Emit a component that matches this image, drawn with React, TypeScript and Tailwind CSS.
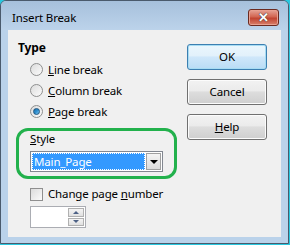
import React from 'react'

function Radio({ checked }: { checked?: boolean }) {
  return (
    <span className="w-[13px] h-[13px] rounded-full border border-[#8e8f8f] bg-gradient-to-br from-[#dcdcdc] to-[#fbfbfb] flex items-center justify-center flex-none">
      {checked && (
        <span className="w-[7px] h-[7px] rounded-full bg-gradient-to-br from-[#1a6ca8] via-[#2f8fcf] to-[#7cc7f0] border border-[#1d5580]" />
      )}
    </span>
  )
}

function Btn({ children, def }: { children: React.ReactNode; def?: boolean }) {
  return (
    <div
      className={
        def
          ? 'w-[80px] h-[26px] rounded-[3px] border border-[#3c7fb1] shadow-[inset_0_0_0_1px_#a7dcf3] bg-[linear-gradient(#eaf6fd_0%,#e2f1fb_45%,#cfe7fa_50%,#b9dcf5_100%)] flex items-center justify-center'
          : 'w-[80px] h-[26px] rounded-[3px] border border-[#707070] shadow-[inset_0_0_0_1px_#fcfcfc] bg-[linear-gradient(#f2f2f2_0%,#ebebeb_45%,#dddddd_50%,#cfcfcf_100%)] flex items-center justify-center'
      }
    >
      <span className="leading-none text-black">{children}</span>
    </div>
  )
}

export default function App() {
  return (
    <div className="w-[290px] h-[245px] bg-[#28c8e0] pr-px pb-px font-['Noto_Sans',sans-serif] text-[11.5px] tracking-[-0.15px] text-black">
      <div className="w-full h-full rounded-t-[6px] border border-[#4a5a6c] bg-[#bad2ea] flex flex-col px-[7px] pb-[6px]">
        <div className="h-[29px] -mx-[7px] px-[11px] rounded-t-[5px] bg-[linear-gradient(#a6c0dc,#bcd3ea)] flex items-start justify-between">
          <span className="mt-[9px] leading-[16px] text-black">Insert Break</span>
          <div className="w-[31px] h-[17px] mt-[8px] mr-[-2px] rounded-[3px] border border-[#6b2a20] shadow-[inset_0_0_0_1px_#e8a090] bg-[linear-gradient(#e6a396,#d26652_45%,#c14431_55%,#d8806b)] flex items-center justify-center">
            <span className="text-white font-bold text-[13px] leading-none [text-shadow:0_0_1px_#333,0_0_1px_#333]">✕</span>
          </div>
        </div>
        <div className="flex-1 bg-[#f0f0f0] flex">
          <div className="w-[177px] flex flex-col pl-[8px]">
            <div className="h-[20px] mt-[8px] flex items-center pl-[2px] font-bold text-[12px]">Type</div>
            <div className="flex flex-col pl-[14px] mt-px">
              <div className="h-[21px] flex items-center gap-[5px]">
                <Radio />
                <span><span className="underline">L</span>ine break</span>
              </div>
              <div className="h-[21px] flex items-center gap-[5px]">
                <Radio />
                <span><span className="underline">C</span>olumn break</span>
              </div>
              <div className="h-[21px] flex items-center gap-[5px]">
                <Radio checked />
                <span><span className="underline">P</span>age break</span>
              </div>
            </div>
            <div className="mt-[6px] w-[161px] h-[51px] border-[3px] border-[#22b14c] rounded-[12px] flex flex-col pl-[11px]">
              <div className="h-[16px] flex items-center"><span><span className="underline">S</span>tyle</span></div>
              <div className="mt-[4px] w-[133px] h-[21px] border border-[#828790] bg-white flex p-[1px]">
                <div className="flex-1 bg-[#3399ff] outline-1 outline-dotted outline-[#ffffff] -outline-offset-1 flex items-center pl-[2px]">
                  <span className="text-white">Main_Page</span>
                </div>
                <div className="w-[15px] border border-[#a0a0a0] bg-[linear-gradient(#f4f4f4,#dcdcdc)] flex items-center justify-center ml-px">
                  <span className="w-0 h-0 border-l-[4px] border-r-[4px] border-t-[4px] border-l-transparent border-r-transparent border-t-black" />
                </div>
              </div>
            </div>
            <div className="h-[16px] mt-[7px] flex items-center gap-[5px] pl-[14px]">
              <span className="w-[13px] h-[13px] border border-[#8f8f8f] bg-gradient-to-br from-[#dcdcdc] to-[#fbfbfb] flex-none" />
              <span>Change page <span className="underline">n</span>umber</span>
            </div>
            <div className="ml-[14px] mt-[4px] w-[56px] h-[22px] border border-[#abadb3] bg-white flex justify-end p-px">
              <div className="w-[16px] flex flex-col gap-px">
                <div className="flex-1 border border-[#b0b0b0] bg-[linear-gradient(#f4f4f4,#e0e0e0)] flex items-center justify-center">
                  <span className="w-0 h-0 border-l-[3px] border-r-[3px] border-b-[3px] border-l-transparent border-r-transparent border-b-[#4d6185]" />
                </div>
                <div className="flex-1 border border-[#b0b0b0] bg-[linear-gradient(#f4f4f4,#e0e0e0)] flex items-center justify-center">
                  <span className="w-0 h-0 border-l-[3px] border-r-[3px] border-t-[3px] border-l-transparent border-r-transparent border-t-[#4d6185]" />
                </div>
              </div>
            </div>
          </div>
          <div className="flex flex-col gap-[9px] pt-[14px] pl-[2px]">
            <Btn def>OK</Btn>
            <Btn>Cancel</Btn>
            <Btn><span className="underline">H</span>elp</Btn>
          </div>
        </div>
      </div>
    </div>
  )
}
